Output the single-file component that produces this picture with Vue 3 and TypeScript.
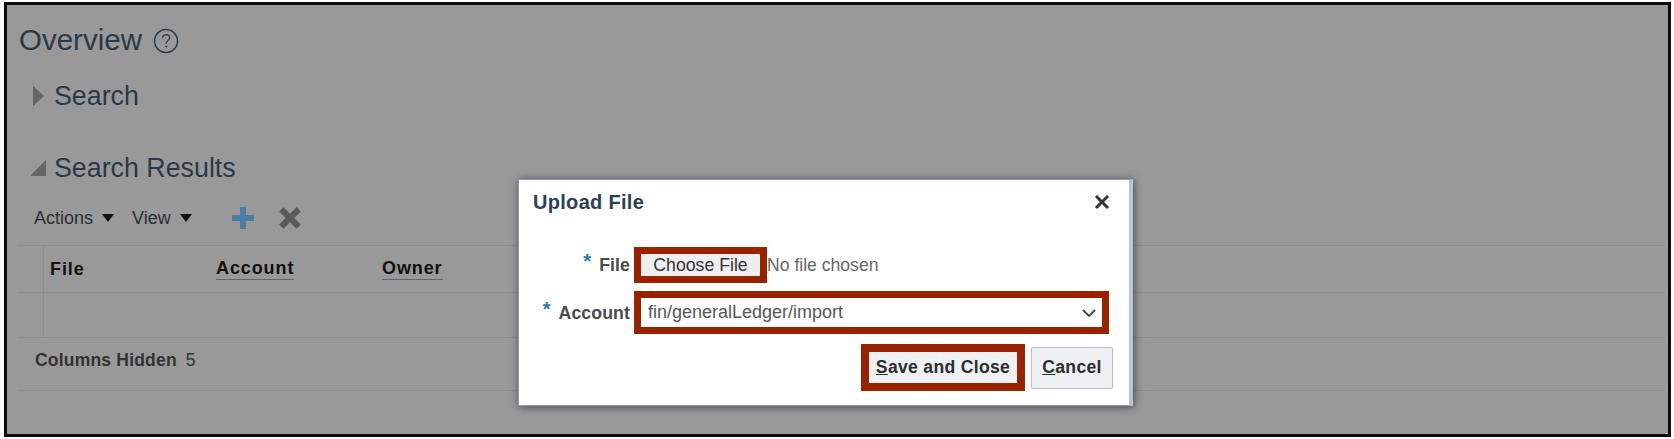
<template>
  <div class="screen">
    <div class="frame">
      <div class="heading">
        <h1 class="page-title">Overview</h1>
        <svg class="help" width="26" height="26" viewBox="0 0 26 26" aria-hidden="true">
          <circle cx="13" cy="13" r="11.5" fill="none" stroke="#2f3b47" stroke-width="1.5" />
          <path d="M9.4 10.2c.2-2.2 1.7-3.4 3.7-3.4s3.6 1.2 3.6 3.1c0 2.6-3.5 2.7-3.5 5.5" fill="none" stroke="#3b4650" stroke-width="1.5" />
          <circle cx="13.2" cy="18.6" r="1.1" fill="#3b4650" />
        </svg>
      </div>

      <div class="section section-search">
        <svg class="disclosure" width="16" height="20" viewBox="0 0 16 20" aria-hidden="true">
          <path d="M2 0l11 10L2 20z" fill="#666" />
        </svg>
        <span>Search</span>
      </div>
      <div class="section section-results">
        <svg class="disclosure" width="16" height="20" viewBox="0 0 16 20" aria-hidden="true">
          <path d="M15 2v16H-1z" fill="#666" />
        </svg>
        <span>Search Results</span>
      </div>

      <div class="toolbar">
        <span class="menu">Actions <i class="caret"></i></span>
        <span class="menu">View <i class="caret"></i></span>
        <svg class="tool-add" width="24" height="24" viewBox="0 0 24 24" aria-hidden="true">
          <path d="M9 1h6v8h8v6h-8v8H9v-8H1V9h8z" fill="#4e7d9f" />
        </svg>
        <svg class="tool-del" width="26" height="26" viewBox="0 0 24 24" aria-hidden="true">
          <path d="M2 6l4-4 6 6 6-6 4 4-6 6 6 6-4 4-6-6-6 6-4-4 6-6z" fill="#5a5a5a" />
        </svg>
      </div>

      <div class="table">
        <div class="row row-head">
          <div class="gutter"></div>
          <div class="cell cell-file">File</div>
          <div class="cell cell-account"><span class="sortable">Account</span></div>
          <div class="cell"><span class="sortable">Owner</span></div>
        </div>
        <div class="row row-empty">
          <div class="gutter"></div>
        </div>
        <div class="table-foot">
          <b>Columns Hidden</b>
          <span>{{ hiddenColumns }}</span>
        </div>
      </div>
    </div>

    <div class="dialog" role="dialog" aria-modal="true">
      <header class="dialog-head">
        <h2 class="dialog-title">Upload File</h2>
        <svg class="dialog-close" width="16" height="16" viewBox="0 0 16 16" aria-hidden="true">
          <path d="M2 2l12 12M14 2L2 14" stroke="#333" stroke-width="3" fill="none" />
        </svg>
      </header>

      <div class="form">
        <label class="field-label"><em>*</em> File</label>
        <div class="file-row">
          <span class="mark mark-file"><button class="choose" type="button">Choose File</button></span>
          <span class="no-file">No file chosen</span>
        </div>
        <label class="field-label"><em>*</em> Account</label>
        <div class="mark mark-select">
          <span>fin/generalLedger/import</span>
          <svg width="16" height="10" viewBox="0 0 16 10" aria-hidden="true">
            <path d="M2 2l6 6 6-6" fill="none" stroke="#444" stroke-width="1.8" />
          </svg>
        </div>
      </div>

      <footer class="dialog-actions">
        <span class="mark mark-save"><button class="btn btn-save" type="button"><u>S</u>ave and Close</button></span>
        <button class="btn btn-cancel" type="button"><u>C</u>ancel</button>
      </footer>
    </div>
  </div>
</template>

<script setup lang="ts">
const hiddenColumns: number = 5
</script>

<style>
html,
body {
  margin: 0;
  background: #fff;
}
</style>

<style scoped>
.screen {
  position: relative;
  width: 1674px;
  height: 439px;
  padding: 2px 3px 2px 4px;
  box-sizing: border-box;
  overflow: hidden;
  font-family: "Liberation Sans", Arial, sans-serif;
  background: #fff;
}

.frame {
  height: 100%;
  box-sizing: border-box;
  border: 3px solid #0b0b0b;
  padding: 18px 3px 0 11px;
  background: #999;
  color: #2c3947;
}

.heading {
  display: flex;
  align-items: center;
  gap: 11px;
  height: 34px;
  padding-left: 1px;
}

.page-title {
  margin: 0;
  font-size: 29.5px;
  font-weight: 400;
  line-height: 34px;
}

.help {
  margin-top: 2px;
}

.section {
  display: flex;
  align-items: center;
  height: 30px;
  padding-left: 13px;
  gap: 7px;
  font-size: 26.8px;
}

.section-search {
  margin-top: 24px;
}

.section-results {
  margin-top: 42px;
}

.disclosure {
  flex: none;
}

.toolbar {
  display: flex;
  align-items: center;
  height: 28px;
  margin-top: 21px;
  padding-left: 16px;
  font-size: 18px;
  color: #2b2f33;
}

.menu {
  display: flex;
  align-items: center;
  gap: 9px;
  margin-right: 18px;
}

.caret {
  width: 0;
  height: 0;
  border-left: 6.5px solid transparent;
  border-right: 6.5px solid transparent;
  border-top: 8px solid #111;
}

.tool-add {
  margin-left: 21px;
}

.tool-del {
  margin-left: 22px;
}

.table {
  margin-top: 13px;
  border-top: 1px solid #8b8f92;
}

.row {
  display: flex;
  border-bottom: 1px solid #8b8f92;
}

.row-head {
  height: 46px;
  align-items: stretch;
  font-size: 18px;
  font-weight: 700;
  letter-spacing: 0.9px;
  color: #111;
}

.row-empty {
  height: 44px;
}

.gutter {
  width: 25px;
  border-right: 1px solid #8b8f92;
}

.cell {
  display: flex;
  align-items: center;
}

.cell-file {
  width: 172px;
  padding-left: 6px;
  box-sizing: border-box;
}

.cell-account {
  width: 166px;
}

.sortable {
  border-bottom: 1px solid #666;
  padding-bottom: 1px;
  line-height: 20px;
}

.table-foot {
  display: flex;
  align-items: center;
  gap: 9px;
  height: 53px;
  padding-left: 17px;
  padding-bottom: 8px;
  box-sizing: border-box;
  border-bottom: 1px solid #8b8f92;
  font-size: 17.5px;
  color: #333;
}

.table-foot b {
  letter-spacing: 0.2px;
}

.dialog {
  position: absolute;
  left: 518px;
  top: 179px;
  width: 615px;
  height: 227px;
  box-sizing: border-box;
  border: 1px solid #8d9dac;
  border-right: 4px solid #b9c5d0;
  background: #fff;
  box-shadow: 1px 1px 8px rgba(0, 0, 0, 0.55);
}

.dialog-head {
  display: flex;
  align-items: center;
  justify-content: space-between;
  height: 44px;
  padding: 0 19px 0 14px;
}

.dialog-title {
  margin: 0;
  font-size: 20px;
  font-weight: 700;
  letter-spacing: 0.3px;
  color: #2a3f55;
}

.form {
  display: grid;
  grid-template-columns: 111px 1fr;
  column-gap: 4px;
  row-gap: 8px;
  margin-top: 23px;
  padding-right: 20px;
  align-items: center;
}

.field-label {
  display: flex;
  justify-content: flex-end;
  gap: 8px;
  line-height: 22px;
  font-size: 17.7px;
  font-weight: 700;
  color: #4a4a4a;
  letter-spacing: 0.1px;
}

.field-label em {
  font-style: normal;
  font-size: 20px;
  line-height: 14px;
  color: #2e77ae;
}

.file-row {
  display: flex;
  align-items: center;
}

.mark {
  box-sizing: border-box;
  border: 7px solid #992200;
}

.mark-file {
  display: block;
  height: 36px;
  width: 133px;
}

.choose {
  display: block;
  width: 100%;
  height: 100%;
  padding: 0;
  border: 0;
  background: #efefef;
  font-family: inherit;
  font-size: 17.7px;
  color: #333;
}

.no-file {
  font-size: 17.6px;
  color: #666;
}

.mark-select {
  display: flex;
  align-items: center;
  justify-content: space-between;
  height: 43px;
  padding: 0 5px 0 7px;
  font-size: 18px;
  color: #555;
}

.dialog-actions {
  display: flex;
  align-items: center;
  justify-content: flex-end;
  gap: 6px;
  margin-top: 10px;
  padding-right: 16px;
}

.mark-save {
  display: block;
  height: 47px;
  width: 164px;
  border-width: 8px;
}

.btn {
  padding: 0;
  font-family: inherit;
  font-size: 17.6px;
  font-weight: 700;
  letter-spacing: 0.3px;
  color: #2d2d2d;
}

.btn-save {
  display: block;
  width: 100%;
  height: 100%;
  border: 0;
  background: #eef0f2;
}

.btn-cancel {
  width: 82px;
  height: 42px;
  border: 1px solid #b4bdc6;
  border-radius: 2px;
  background: #eef0f2;
}
</style>
